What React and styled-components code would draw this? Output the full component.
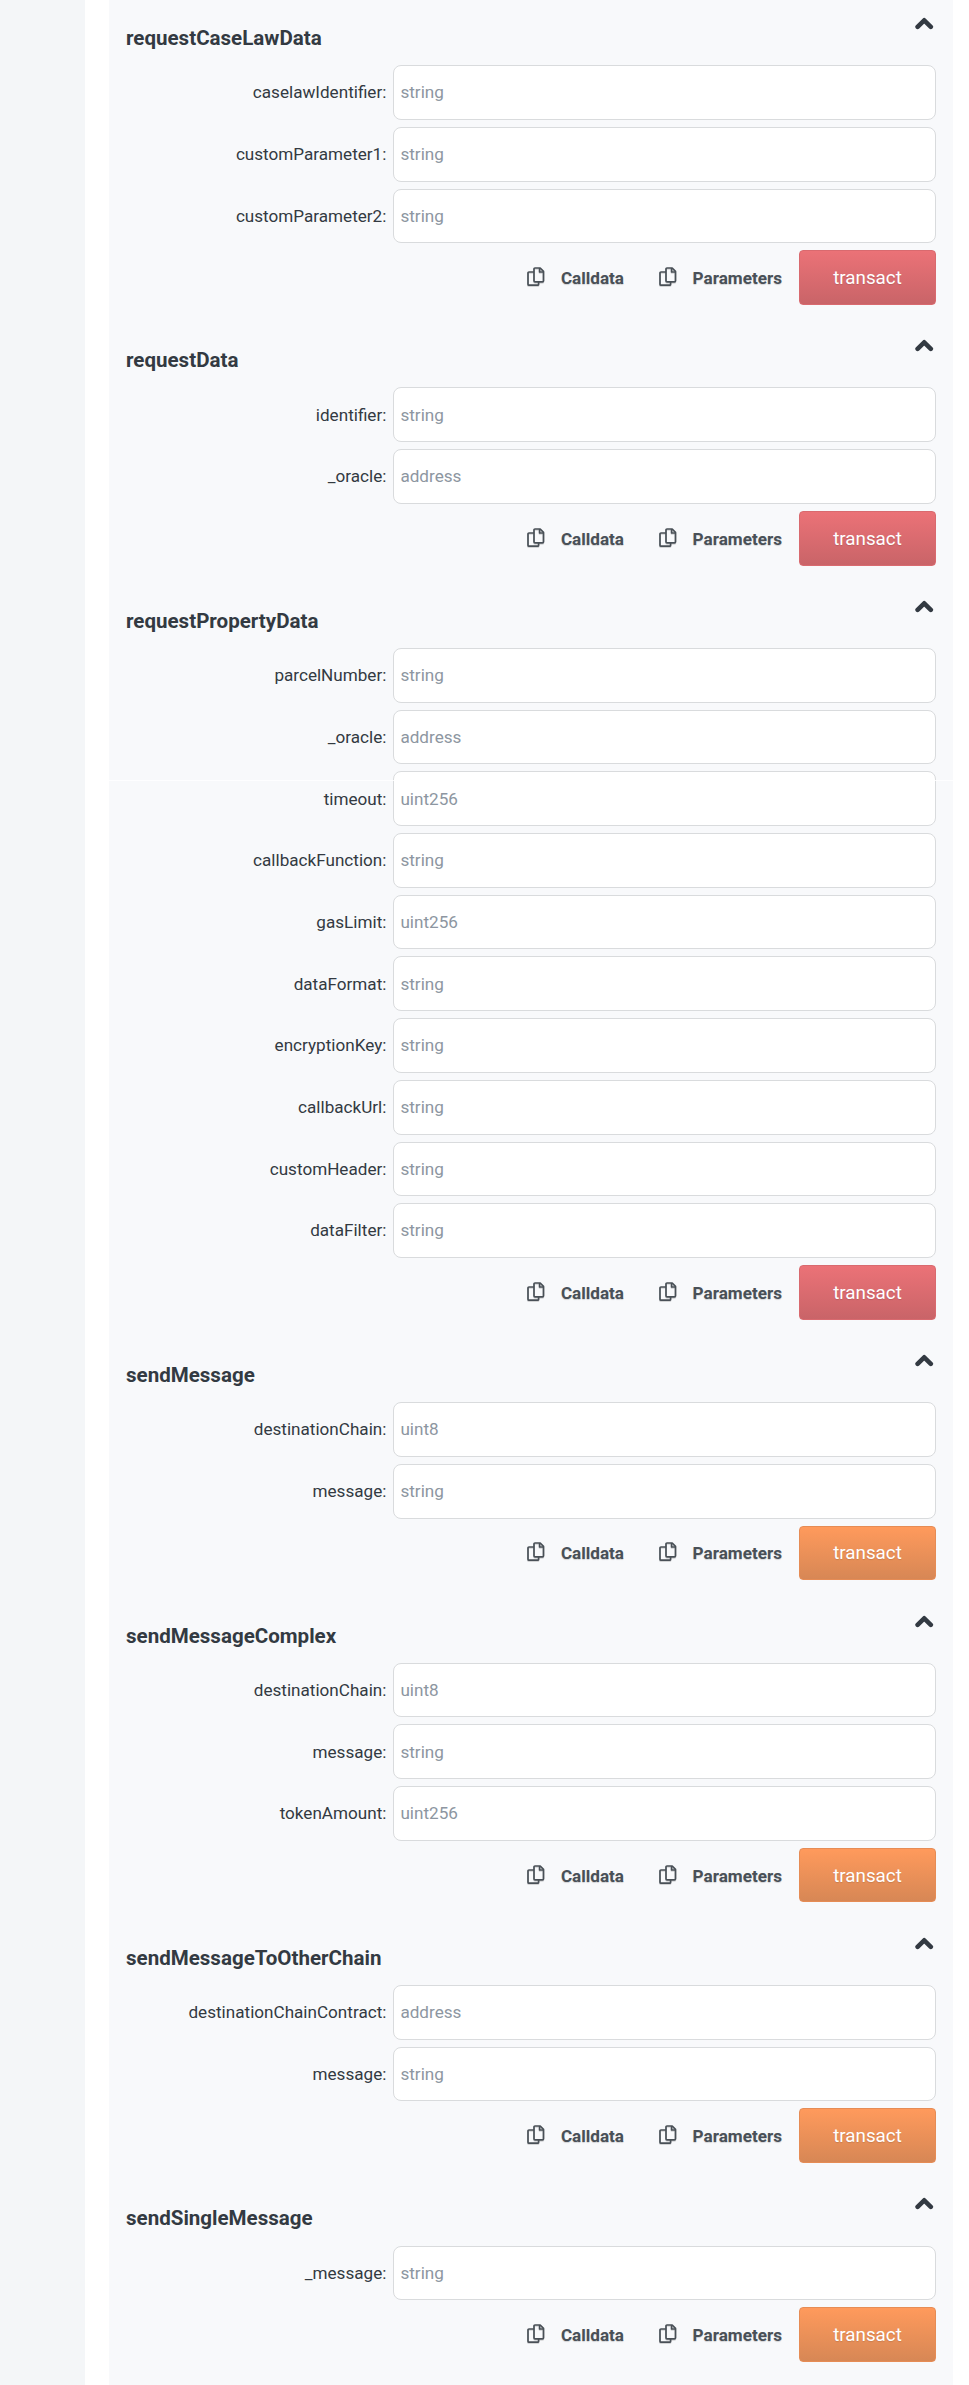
import React from "react";
import styled, { createGlobalStyle } from "styled-components";

const GlobalStyle = createGlobalStyle`
  * { box-sizing: border-box; }
  body { margin: 0; background: #fff; font-family: Roboto, "Liberation Sans", sans-serif; }
`;

const Page = styled.div`
  display: flex;
  height: 2385px;
  overflow: hidden;
`;

const Rail = styled.aside`
  flex: 0 0 85px;
  background: #f4f6f8;
`;

const Panel = styled.main`
  position: relative;
  flex: 0 0 844px;
  min-width: 0;
  margin-left: 24px;
  padding: 16.65px 17px 0;
  background: #f8f9fb;
`;

const Seam = styled.div`
  position: absolute;
  top: 780px;
  left: 0;
  right: 0;
  height: 1px;
  background: rgba(255, 255, 255, 0.85);
`;

const Section = styled.section`
  margin-bottom: 34px;
`;

const Header = styled.header`
  display: flex;
  justify-content: space-between;
  height: 48.54px;
  padding-right: 2px;
  color: #333a42;
`;

const Title = styled.h2`
  margin: 8.35px 0 0;
  font-size: 20.55px;
  line-height: 26px;
  font-weight: 700;
`;

const Caret = styled.svg`
  width: 20px;
  height: 16px;
  margin-top: -0.65px;
`;

const Field = styled.label`
  display: grid;
  grid-template-columns: 1fr 542.6px;
  column-gap: 7px;
  align-items: center;
  height: 54.7px;
  margin-bottom: 7px;
  font-size: 17.12px;
  color: #333a42;
`;

const FieldName = styled.span`
  padding-bottom: 0.5px;
  text-align: right;
`;

const Input = styled.input`
  width: 100%;
  height: 100%;
  padding: 0 6px 0.5px;
  border: 1px solid #d9dbdd;
  border-radius: 8px;
  background: #fff;
  font: inherit;
  outline: none;
  &::placeholder { color: #8d96a1; opacity: 1; }
`;

const Actions = styled.div`
  display: flex;
  justify-content: flex-end;
  align-items: center;
  height: 54.7px;
`;

const CopyButton = styled.button`
  display: flex;
  align-items: center;
  gap: 15.9px;
  margin-right: ${(p) => p.$gap}px;
  padding: 0.8px 0 0;
  border: 0;
  background: none;
  color: #495057;
  font: 700 17.12px Roboto, sans-serif;
  text-shadow: 0 1px 1px rgba(0, 0, 0, 0.15);
`;

const CopyGlyph = styled.svg`
  width: 18px;
  height: 20px;
  margin-bottom: 2px;
  filter: drop-shadow(0 1px 0.5px rgba(0, 0, 0, 0.15));
`;

const Transact = styled.button`
  width: 137px;
  height: 100%;
  padding: 0.8px 0 0;
  border: 1px solid ${(p) => (p.$warm ? "#e68c55" : "#d96a6f")};
  border-radius: 4px;
  background: ${(p) => (p.$warm ? "linear-gradient(#ff9a5c, #d78755)" : "linear-gradient(#eb7277, #c96468)")};
  color: #fff;
  font: 400 18.8px Roboto, sans-serif;
  text-shadow: 0 1px 1px rgba(0, 0, 0, 0.12);
`;

const CopyIcon = () => (
  <CopyGlyph viewBox="0 0 18 20" fill="none" stroke="currentColor" strokeWidth="1.7" strokeLinejoin="round">
    <path d="M7 5H2Q1 5 1 6V17.2Q1 18.2 2 18.2H10.6Q11.6 18.2 11.6 17.2V14.8" />
    <path d="M8 1H13.2L16.5 4.3V13.8Q16.5 14.8 15.5 14.8H8Q7 14.8 7 13.8V2Q7 1 8 1Z" />
    <path d="M12.6 1V5H16.5" />
  </CopyGlyph>
);

const CaretUp = () => (
  <Caret viewBox="0 0 20 16" fill="none" stroke="currentColor" strokeWidth="4.6" strokeLinecap="round" strokeLinejoin="round">
    <path d="M3.6 10.8L10.2 4.3L16.8 10.8" />
  </Caret>
);

const functions = [
  { name: "requestCaseLawData", fields: [["caselawIdentifier", "string"], ["customParameter1", "string"], ["customParameter2", "string"]] },
  { name: "requestData", fields: [["identifier", "string"], ["_oracle", "address"]] },
  {
    name: "requestPropertyData",
    fields: [
      ["parcelNumber", "string"], ["_oracle", "address"], ["timeout", "uint256"], ["callbackFunction", "string"],
      ["gasLimit", "uint256"], ["dataFormat", "string"], ["encryptionKey", "string"], ["callbackUrl", "string"],
      ["customHeader", "string"], ["dataFilter", "string"],
    ],
  },
  { name: "sendMessage", warm: true, fields: [["destinationChain", "uint8"], ["message", "string"]] },
  { name: "sendMessageComplex", warm: true, fields: [["destinationChain", "uint8"], ["message", "string"], ["tokenAmount", "uint256"]] },
  { name: "sendMessageToOtherChain", warm: true, fields: [["destinationChainContract", "address"], ["message", "string"]] },
  { name: "sendSingleMessage", warm: true, fields: [["_message", "string"]] },
];

export default function App() {
  return (
    <Page>
      <GlobalStyle />
      <Rail />
      <Panel>
        {functions.map((fn) => (
          <Section key={fn.name}>
            <Header>
              <Title>{fn.name}</Title>
              <CaretUp />
            </Header>
            {fn.fields.map(([name, type]) => (
              <Field key={name}>
                <FieldName>{name}:</FieldName>
                <Input placeholder={type} />
              </Field>
            ))}
            <Actions>
              <CopyButton $gap={34.7}><CopyIcon />Calldata</CopyButton>
              <CopyButton $gap={17}><CopyIcon />Parameters</CopyButton>
              <Transact $warm={fn.warm}>transact</Transact>
            </Actions>
          </Section>
        ))}
        <Seam />
      </Panel>
    </Page>
  );
}
